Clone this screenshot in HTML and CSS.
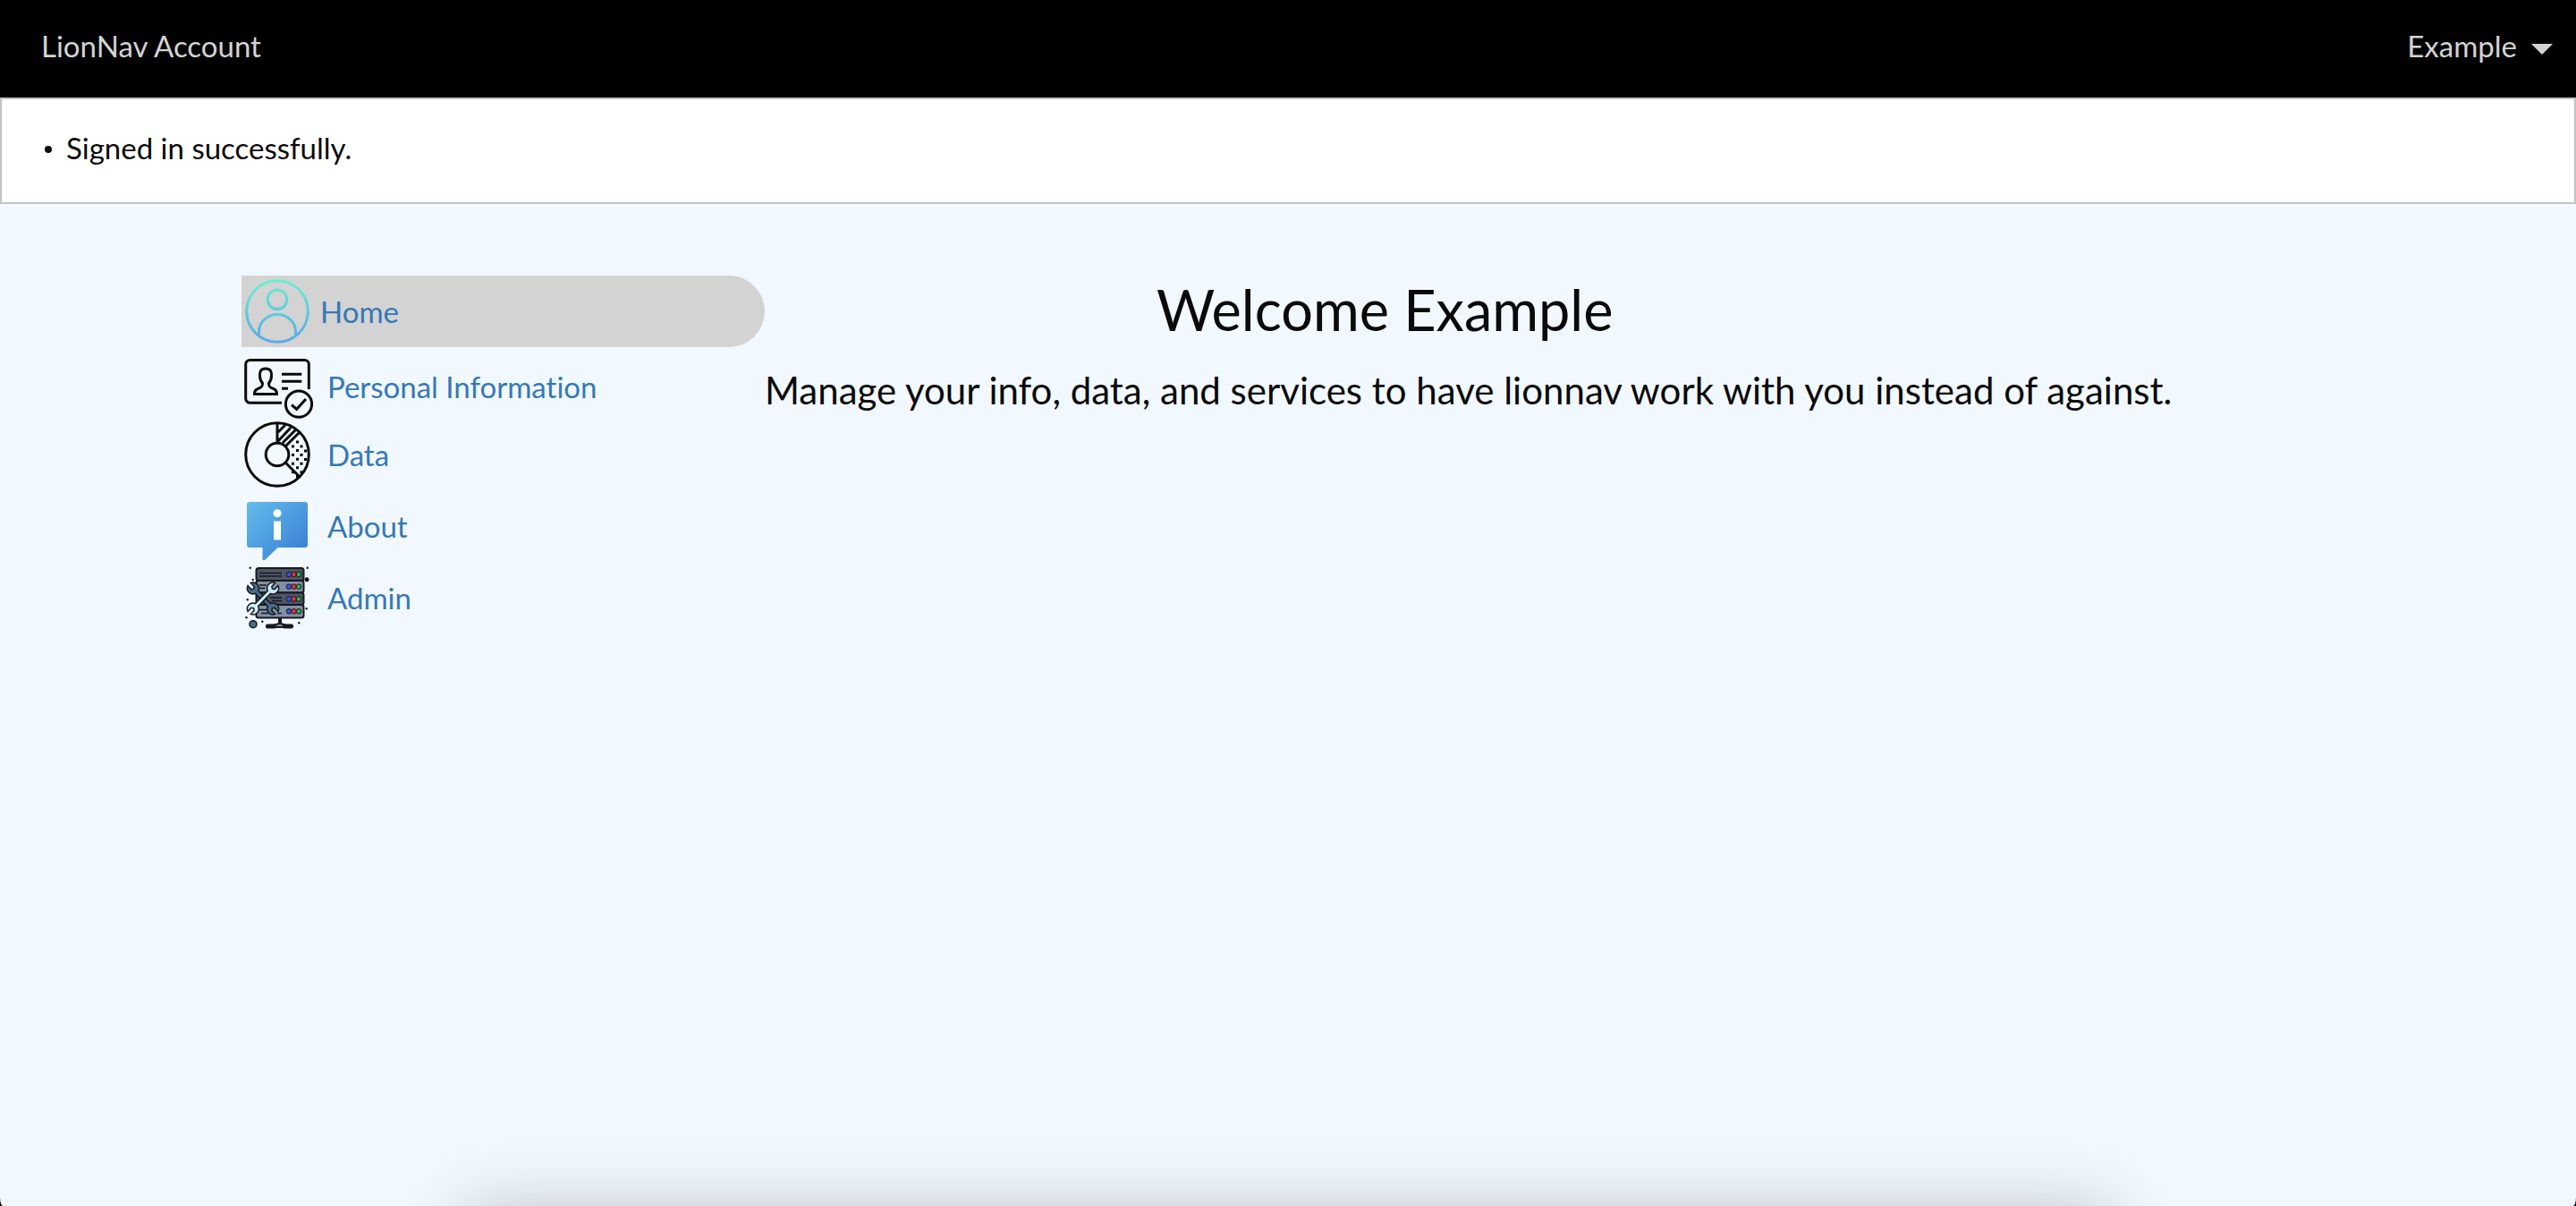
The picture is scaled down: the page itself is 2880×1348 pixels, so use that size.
FILE: index.html
```html
<!DOCTYPE html>
<html lang="en">
<head>
  <meta charset="utf-8">
  <title>LionNav Account</title>
  <meta name="viewport" content="width=device-width, initial-scale=1">
  <link rel="stylesheet" href="styles.css">
</head>
<body>
  <header class="topbar">
    <a class="brand" href="#">LionNav Account</a>
    <button class="account" type="button" aria-haspopup="true">Example
      <svg class="caret" viewBox="0 0 24 12" aria-hidden="true"><path d="M0 0h24L12 12z" fill="currentColor"/></svg>
    </button>
  </header>

  <ul class="flash">
    <li>Signed in successfully.</li>
  </ul>

  <div class="layout">
    <nav class="menu">
      <a class="item active" href="#">
        <svg class="icon" viewBox="0 0 80 80" fill="none" stroke="url(#teal)" stroke-width="3" aria-hidden="true">
          <defs><linearGradient id="teal" gradientUnits="userSpaceOnUse" x1="0" y1="4" x2="0" y2="76"><stop offset="0" stop-color="#6cf0cf"/><stop offset="1" stop-color="#54a8e8"/></linearGradient></defs>
          <circle cx="40" cy="40" r="34.3"/><circle cx="40" cy="26.7" r="10.8"/><path d="M19.5 66V62.500a20.500 19 0 0 1 41 0V66"/>
        </svg>
        Home
      </a>
      <a class="item short" href="#">
        <svg class="icon" viewBox="0 0 80 72" fill="none" stroke="#0a0a0a" stroke-width="3" aria-hidden="true">
          <path d="M45 54.300H9.500a4.800 4.800 0 0 1-4.800-4.800V11.200a4.800 4.800 0 0 1 4.800-4.800h61a4.800 4.800 0 0 1 4.800 4.800V39M45 22.300h22.300M45 30.300h22.300M45 38.300h7"/>
          <path d="M27 16c-5 0-7 3-6.500 8 0 4 1 6 3 8.500 0 3.500-1 4.500-4 5.500-3.500 1-5 3-5 6.500h25c0-3.500-1.500-5.500-5-6.500-3-1-4-2-4-5.500 2-2.500 3-4.500 3-8.500.5-5-1.500-8-6.500-8z"/>
          <circle cx="64" cy="55.700" r="14.600"/><path d="M56 56.500l5.700 4.800L72 50"/>
        </svg>
        Personal Information
      </a>
      <a class="item" href="#">
        <svg class="icon" viewBox="0 0 80 80" fill="none" stroke="#0a0a0a" stroke-width="3" aria-hidden="true">
          <circle cx="40" cy="40" r="35.300"/><circle cx="40" cy="40" r="12.800"/>
          <path d="M40 5v22M49 31l16-16M49 49l16 16M41 15l8-8M41 25L55 10M46 27L61 12"/>
          <g stroke-dasharray="3 6.600"><path d="M57.500 29.500v32"/><path d="M62.500 24.500v42"/><path d="M67 29.500v32"/><path d="M71.500 34.500v16"/></g>
        </svg>
        Data
      </a>
      <a class="item" href="#">
        <svg class="icon" viewBox="0 0 80 80" aria-hidden="true">
          <defs><linearGradient id="blue" x1="0" y1="0" x2="1" y2="1"><stop offset="0" stop-color="#64bdeb"/><stop offset="1" stop-color="#367bd3"/></linearGradient></defs>
          <path d="M9 13h62a3 3 0 0 1 3 3v45a3 3 0 0 1-3 3H40.500L26.500 77.500q-3 2-3-1V64H9a3 3 0 0 1-3-3V16a3 3 0 0 1 3-3z" fill="url(#blue)"/>
          <circle cx="40" cy="25.700" r="4.500" fill="#fff"/><path d="M36 34.500h8v21h-8z" fill="#fff"/>
        </svg>
        About
      </a>
      <a class="item" href="#">
        <svg class="icon" viewBox="0 0 80 80" aria-hidden="true">
          <g stroke="#16191f" stroke-width="2">
            <path d="M42 63v6l-7 2v2h15v-2l-6-2v-6z" fill="#8290a5"/>
            <rect x="28" y="70.500" width="10" height="3" rx="1" fill="#16191f"/><rect x="47" y="70.500" width="10" height="3" rx="1" fill="#16191f"/>
            <rect x="16.500" y="7" width="53" height="14" rx="2.500" fill="#4e5563"/>
            <rect x="16.500" y="21" width="53" height="13.500" rx="2.500" fill="#8290a5"/>
            <rect x="16.500" y="34.500" width="53" height="13.500" rx="2.500" fill="#4e5563"/>
            <rect x="16.500" y="48" width="53" height="14.500" rx="2.500" fill="#8290a5"/>
          </g>
          <path d="M20 12.500h25M20 16h25M20 26h8M20 29.500h6M32 40h13M34 43.500h11M20 53.500h8M40 57.500h5M22 57.500h8" stroke="#16191f" stroke-width="1.500"/>
          <g fill="#3455f0" stroke="#16191f"><circle cx="53" cy="14" r="2.800"/><circle cx="53" cy="27.700" r="2.800"/><circle cx="53" cy="41.500" r="2.800"/><circle cx="53" cy="55.300" r="2.800"/></g>
          <g fill="#f02b35" stroke="#16191f"><circle cx="58.500" cy="14" r="2.800"/><circle cx="58.500" cy="27.700" r="2.800"/><circle cx="58.500" cy="41.500" r="2.800"/><circle cx="58.500" cy="55.300" r="2.800"/></g>
          <g fill="#2fae52" stroke="#16191f"><circle cx="64" cy="14" r="2.800"/><circle cx="64" cy="27.700" r="2.800"/><circle cx="64" cy="41.500" r="2.800"/><circle cx="64" cy="55.300" r="2.800"/></g>
          <defs><path id="wrench" d="M-9.900-2.200H9.900A6.500 6.500 0 0 1 22.100-2.200H16.500L15 0l1.500 2.200H22.100A6.500 6.500 0 0 1 9.900 2.200H-9.900A6.500 6.500 0 0 1-22.100 2.200H-16.500L-15 0l-1.500-2.200H-22.100A6.500 6.500 0 0 1-9.900-2.200z"/></defs>
          <use href="#wrench" transform="translate(24 41) rotate(46)" fill="#456d8b" stroke="#16191f" stroke-width="1.500"/>
          <use href="#wrench" transform="translate(24 41) rotate(-46)" fill="#c9f0f2" stroke="#16191f" stroke-width="1.500"/>
          <circle cx="13" cy="69.700" r="4" fill="#456d8b" stroke="#16191f" stroke-width="1.500"/>
          <g fill="#16191f"><circle cx="73" cy="19.700" r="2.500"/><circle cx="9.700" cy="6.700" r="1.200"/><circle cx="12.700" cy="20" r="1.200"/><circle cx="73.700" cy="6.700" r="1.200"/><circle cx="72.700" cy="52.300" r="1.200"/><circle cx="64.300" cy="68.300" r="1.200"/><circle cx="23.300" cy="66.700" r="1.200"/><circle cx="5.500" cy="62.300" r="1.200"/><circle cx="6.700" cy="42.300" r="1.200"/></g>
        </svg>
        Admin
      </a>
    </nav>

    <main class="content">
      <h1>Welcome Example</h1>
      <p>Manage your info, data, and services to have lionnav work with you instead of against.</p>
    </main>
  </div>

  <div class="bottom-shade" aria-hidden="true"></div>
</body>
</html>
```
FILE: styles.css
```css
* {
  box-sizing: border-box;
}

html {
  background: #000;
}

body {
  min-height: 100vh;
  margin: 0;
  background: #f2f8ff;
  border-radius: 0 0 3px 3px / 0 0 10px 10px;
  color: #0a0a0a;
  font-family: Lato, "Liberation Sans", sans-serif;
  font-size: 33px;
  font-variant-ligatures: none;
  line-height: 40px;
}

.topbar {
  display: flex;
  align-items: center;
  justify-content: space-between;
  height: 109px;
  padding: 0 26px 8px 46px;
  background: #000;
}

.brand,
.account {
  color: #d3d3d3;
  font: inherit;
  text-decoration: none;
}

.account {
  display: flex;
  align-items: center;
  gap: 16px;
  padding: 0;
  border: 0;
  background: none;
}

.caret {
  width: 24px;
  height: 12px;
  margin-top: 8px;
}

.flash {
  margin: 0;
  padding: 34px 48px 41px;
  border: 2px solid #c3c3c3;
  background: #fff;
  list-style: none;
}

.flash li {
  display: flex;
  align-items: center;
  gap: 16px;
}

.flash li::before {
  width: 8px;
  height: 8px;
  margin-top: 4px;
  border-radius: 50%;
  background: #0a0a0a;
  content: "";
}

.layout {
  display: grid;
  grid-template-columns: 1fr 3fr;
  margin: 80px 9.375% 0;
}

.menu {
  display: flex;
  flex-direction: column;
}

.item {
  display: flex;
  align-items: center;
  gap: 16px;
  height: 80px;
  color: #3578b8;
  text-decoration: none;
}

.item.active {
  gap: 8px;
  margin-bottom: 8px;
  border-radius: 0 40px 40px 0;
  background: #d3d3d3;
}

.item.short {
  height: 72px;
}

.icon {
  flex: none;
  width: 80px;
  height: 100%;
}

h1 {
  width: 79%;
  margin: 0;
  font-size: 63px;
  font-weight: 400;
  line-height: 76px;
  text-align: center;
}

.content p {
  margin: 28px 0 0;
  font-size: 42px;
  line-height: 48px;
}

/* soft shadow rising from the lower edge of the window */
.bottom-shade {
  position: fixed;
  top: calc(100% + 4px);
  right: 18%;
  left: 18%;
  height: 80px;
  box-shadow: 0 0 76px rgb(0 0 0 / 22%);
}
```
